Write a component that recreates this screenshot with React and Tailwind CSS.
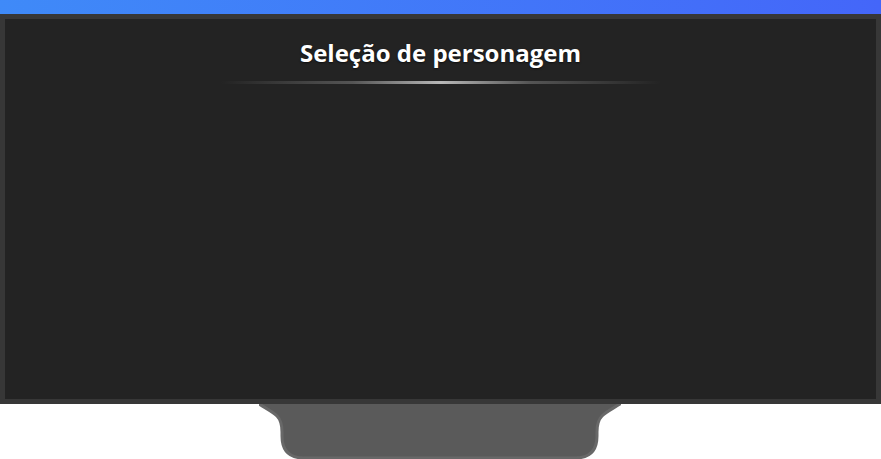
import React from "react";

// stand under the screen
const Stand = () => (
  <svg width="362" height="55" viewBox="0 0 362 55" className="block">
    <path
      d="M-2,-4 L0,0 C8,5 14,8 18,12 C22,16 23,22 23,28 L23,32 Q23,54 45,54 L316,54 Q338,54 338,32 L338,28 C338,22 339,16 343,12 C347,8 353,5 361,0 L363,-4 Z"
      fill="#5a5a5a"
      stroke="#686868"
      strokeWidth="3"
    />
  </svg>
);

export default function App() {
  return (
    <div className="w-[881px] h-[459px] bg-white flex flex-col overflow-hidden">
      <div className="h-[14px] bg-gradient-to-r from-[#3f8af8] to-[#4466f9]" />
      <div className="h-[390px] border-[5px] border-[#373737] bg-[#232323] flex flex-col items-center">
        <h1
          className="mt-[17px] text-white font-bold text-[24px] leading-[34px] [text-shadow:0_1px_2px_rgba(0,0,0,0.6)]"
          style={{ fontFamily: '"Open Sans", "Liberation Sans", sans-serif' }}
        >
          Seleção de personagem
        </h1>
        <div className="mt-[11px] h-[3px] w-[440px] bg-[linear-gradient(to_right,transparent,#555_30%,#b8b8b8_50%,#555_70%,transparent)]" />
      </div>
      <div className="flex justify-center pr-[1px]">
        <Stand />
      </div>
    </div>
  );
}
